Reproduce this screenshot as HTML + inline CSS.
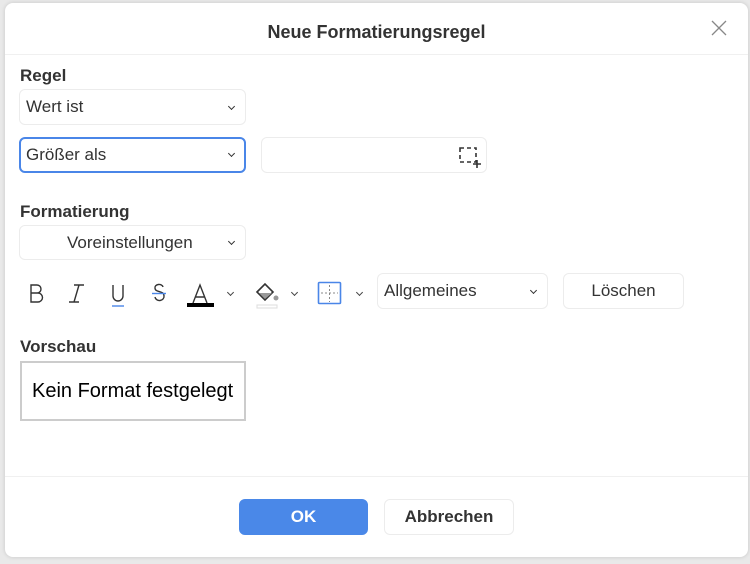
<!DOCTYPE html>
<html><head><meta charset="utf-8"><style>
*{box-sizing:border-box;margin:0;padding:0}
body{width:750px;height:564px;background:#e9e9e9;font-family:"Liberation Sans",sans-serif;position:relative;overflow:hidden;color:#333}
.dlg{position:absolute;left:5px;top:3px;width:743px;height:554px;background:#fff;border-radius:8px;box-shadow:0 0 4px rgba(0,0,0,.15)}
.a{position:absolute}
.title{left:0;width:743px;top:19px;text-align:center;font-weight:bold;font-size:18px}
.hl{left:0;width:743px;height:1px;background:#f0f0f0}
.lbl{font-weight:bold;font-size:17px}
.sel{border:1px solid #ececec;border-radius:6px;font-size:17px;padding-left:6px;line-height:34px}
.chev{position:absolute;right:11px;top:14px;width:5px;height:5px;border-right:1.5px solid #333;border-bottom:1.5px solid #333;transform:rotate(45deg)}
.sc{width:5px;height:5px;border-right:1.5px solid #444;border-bottom:1.5px solid #444;transform:rotate(45deg);top:287px}
.btn{border:1px solid #ececec;border-radius:6px;text-align:center;line-height:34px}
</style></head><body>
<div class="dlg">
<div class="a title">Neue Formatierungsregel</div>
<svg class="a" style="left:706px;top:17px" width="16" height="16"><path d="M1 1L15 15M15 1L1 15" stroke="#888" stroke-width="1.3"/></svg>
<div class="a hl" style="top:51px"></div>
<div class="a lbl" style="left:15px;top:63px">Regel</div>
<div class="a sel" style="left:14px;top:86px;width:227px;height:36px">Wert ist<div class="chev"></div></div>
<div class="a sel" style="left:14px;top:134px;width:227px;height:36px;border:2px solid #4a86e8;line-height:32px;padding-left:5px">Größer als<div class="chev" style="top:12px;right:10px"></div></div>
<div class="a sel" style="left:256px;top:134px;width:226px;height:36px"></div>
<svg class="a" style="left:453px;top:143px" width="24" height="22"><rect x="2" y="2" width="16" height="14" fill="none" stroke="#333" stroke-width="1.6" stroke-dasharray="4 3"/><path d="M19 14v8M15 18h8" stroke="#333" stroke-width="1.6"/></svg>
<div class="a lbl" style="left:15px;top:199px">Formatierung</div>
<div class="a sel" style="left:14px;top:222px;width:227px;height:35px;line-height:33px;padding-left:47px">Voreinstellungen<div class="chev" style="top:13px"></div></div>
<svg class="a" style="left:14px;top:276px" width="200" height="34" fill="none" stroke="#333" stroke-width="1.4">
<path d="M12 6h6a4 4 0 0 1 0 8h-6zM12 14h7a4.5 4.5 0 0 1 0 9h-7z"/>
<path d="M55 6h10M50 23h10M60 6l-5 17"/>
<path d="M94 6v11a5 5 0 0 0 10 0V6"/><path d="M93 27h12" stroke="#4a86e8"/>
<path d="M144 8a4 3 0 0 0-8 1c0 5 9 2 9 8a4.5 4 0 0 1-9 1"/><path d="M133 14.5h14" stroke="#4a86e8"/>
<path d="M174 24l7-18 7 18M176.5 18h9"/>
</svg>
<div class="a" style="left:182px;top:300px;width:27px;height:4px;background:#000"></div>
<div class="a sc" style="left:223px"></div>
<svg class="a" style="left:246px;top:276px" width="30" height="30"><path d="M6 13L14 5L22 13L14 21Z" fill="none" stroke="#333" stroke-width="1.6"/><path d="M8 14h13l-7 6z" fill="#999"/><circle cx="25" cy="19" r="2.5" fill="#999"/><rect x="6" y="26" width="20" height="3" fill="none" stroke="#ddd"/></svg>
<div class="a sc" style="left:287px"></div>
<svg class="a" style="left:312px;top:278px" width="26" height="25"><rect x="1.5" y="1.5" width="22" height="21" rx="1" fill="none" stroke="#4a86e8" stroke-width="1.6"/><path d="M12.5 4v17M4 12h17" stroke="#888" stroke-dasharray="2 2"/></svg>
<div class="a sc" style="left:352px"></div>
<div class="a sel" style="left:372px;top:270px;width:171px;height:36px">Allgemeines<div class="chev"></div></div>
<div class="a btn" style="left:558px;top:270px;width:121px;height:36px;font-size:17px">Löschen</div>
<div class="a lbl" style="left:15px;top:334px">Vorschau</div>
<div class="a" style="left:15px;top:358px;width:226px;height:60px;border:2px solid #ccc;font-size:20px;line-height:56px;padding-left:10px;color:#000">Kein Format festgelegt</div>
<div class="a hl" style="top:473px"></div>
<div class="a btn" style="left:234px;top:496px;width:129px;height:36px;background:#4a88e8;border-color:#4a88e8;color:#fff;font-weight:bold;font-size:17px">OK</div>
<div class="a btn" style="left:379px;top:496px;width:130px;height:36px;font-weight:bold;font-size:17px">Abbrechen</div>
</div>
</body></html>
